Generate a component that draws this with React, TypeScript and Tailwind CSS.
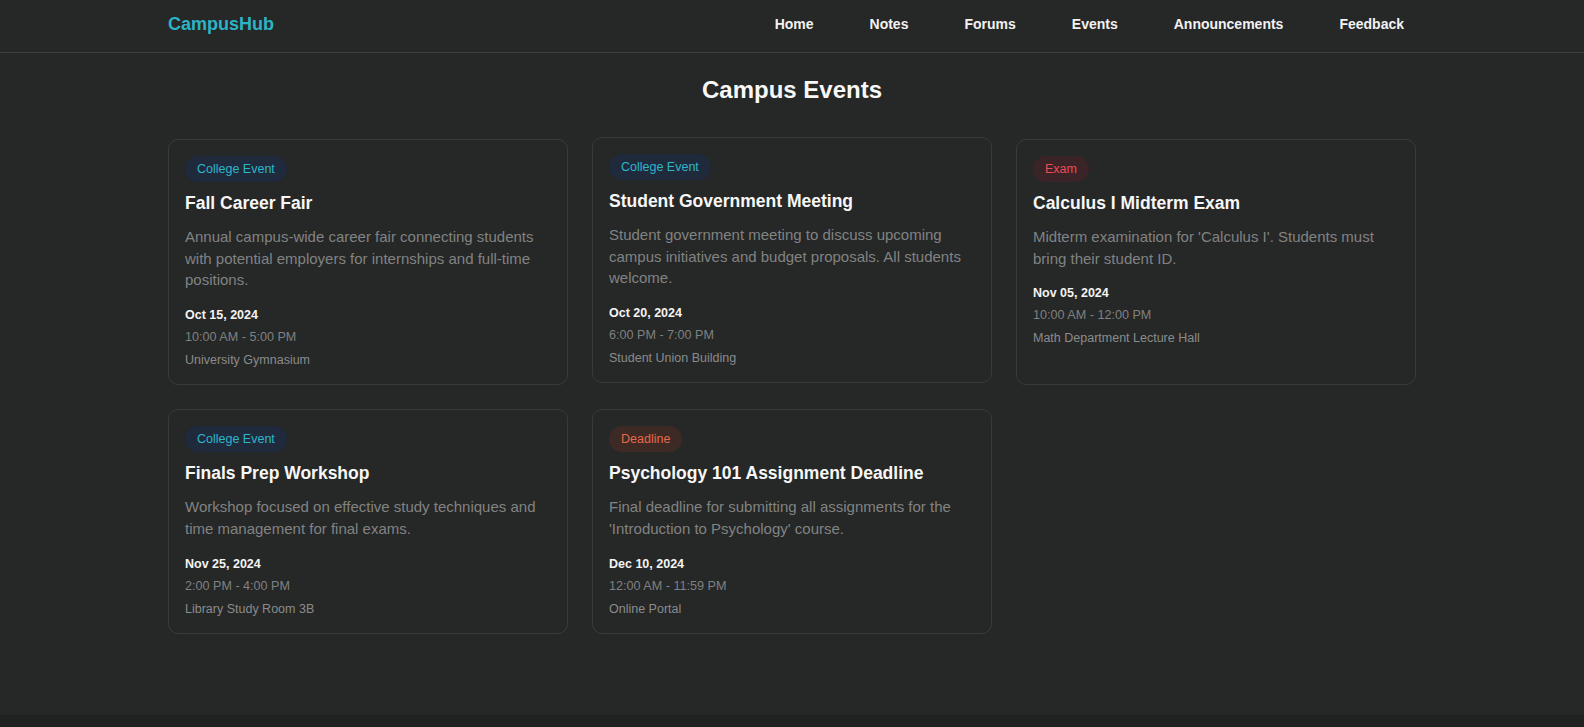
import React from "react";

type Ev = {
  tag: "College Event" | "Exam" | "Deadline";
  title: string;
  desc: string;
  date: string;
  time: string;
  place: string;
  lift?: boolean;
};

const events: Ev[] = [
  {
    tag: "College Event",
    title: "Fall Career Fair",
    desc: "Annual campus-wide career fair connecting students with potential employers for internships and full-time positions.",
    date: "Oct 15, 2024",
    time: "10:00 AM - 5:00 PM",
    place: "University Gymnasium",
  },
  {
    tag: "College Event",
    title: "Student Government Meeting",
    desc: "Student government meeting to discuss upcoming campus initiatives and budget proposals. All students welcome.",
    date: "Oct 20, 2024",
    time: "6:00 PM - 7:00 PM",
    place: "Student Union Building",
    lift: true,
  },
  {
    tag: "Exam",
    title: "Calculus I Midterm Exam",
    desc: "Midterm examination for 'Calculus I'. Students must bring their student ID.",
    date: "Nov 05, 2024",
    time: "10:00 AM - 12:00 PM",
    place: "Math Department Lecture Hall",
  },
  {
    tag: "College Event",
    title: "Finals Prep Workshop",
    desc: "Workshop focused on effective study techniques and time management for final exams.",
    date: "Nov 25, 2024",
    time: "2:00 PM - 4:00 PM",
    place: "Library Study Room 3B",
  },
  {
    tag: "Deadline",
    title: "Psychology 101 Assignment Deadline",
    desc: "Final deadline for submitting all assignments for the 'Introduction to Psychology' course.",
    date: "Dec 10, 2024",
    time: "12:00 AM - 11:59 PM",
    place: "Online Portal",
  },
];

function Badge({ tag }: { tag: Ev["tag"] }) {
  const cls =
    tag === "College Event"
      ? "bg-[#1f2a3c] text-[#2eb6c9]"
      : tag === "Exam"
      ? "bg-[#3b2427] text-[#ec4b55]"
      : "bg-[#3e2a24] text-[#e6694b]";
  return (
    <span
      className={`inline-flex h-[26px] items-center rounded-full px-3 text-[12.5px] font-medium ${cls}`}
    >
      {tag}
    </span>
  );
}

function Card({ ev }: { ev: Ev }) {
  return (
    <div
      className={`flex flex-col rounded-[10px] border border-[#393a3a] bg-[#262727] p-4 pb-[13px] ${
        ev.lift ? "-translate-y-[2px]" : ""
      }`}
    >
      <div className="flex">
        <Badge tag={ev.tag} />
      </div>
      <h3 className="mt-[7px] text-[17.5px] font-bold leading-[28px] text-[#f7f7f7]">
        {ev.title}
      </h3>
      <p className="mt-[9px] text-[15px] leading-[21.7px] text-[#818383]">
        {ev.desc}
      </p>
      <div className="mt-[14px] text-[12.5px] font-bold leading-[21px] text-[#f4f4f4]">
        {ev.date}
      </div>
      <div className="mt-[1px] text-[12.6px] leading-[21px] text-[#7f8181]">
        {ev.time}
      </div>
      <div className="mt-[2px] text-[12.5px] leading-[21px] text-[#8a8c8c]">
        {ev.place}
      </div>
    </div>
  );
}

export default function App() {
  return (
    <div
      className="min-h-screen bg-[#262727] text-white"
      style={{ fontFamily: '"Liberation Sans", Arial, sans-serif' }}
    >
      <header className="border-b border-[#3d3e3e]">
        <nav className="mx-auto flex h-[52px] max-w-7xl items-center justify-between px-4 pb-[4px]">
          <span className="text-[18px] font-bold text-[#2cb4c6]">CampusHub</span>
          <ul className="flex items-center gap-8">
            {["Home", "Notes", "Forums", "Events", "Announcements", "Feedback"].map(
              (l) => (
                <li key={l}>
                  <a className="px-3 text-[14px] font-bold text-[#f2f2f2]">{l}</a>
                </li>
              )
            )}
          </ul>
        </nav>
      </header>
      <main className="mx-auto max-w-7xl px-4 pb-[81px] pt-[21px]">
        <h1 className="mb-[33px] text-center text-[24px] font-bold leading-[32px] text-[#f8f8f8]">
          Campus Events
        </h1>
        <div className="grid grid-cols-3 gap-6">
          {events.map((ev) => (
            <Card key={ev.title} ev={ev} />
          ))}
        </div>
      </main>
      <footer className="h-[60px] bg-[#202121]" />
    </div>
  );
}
